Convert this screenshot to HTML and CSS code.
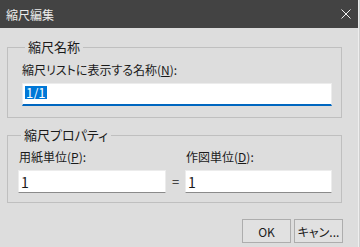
FILE: index.html
```html
<!DOCTYPE html>
<html lang="ja">
<head>
    <meta charset="UTF-8">
    <title>縮尺編集</title>
    <link rel="stylesheet" href="styles.css">
</head>
<body>
    <div class="window">
        <div class="titlebar">
            <span class="title">縮尺編集</span>
            <svg class="close" width="10" height="10" viewBox="0 0 10 10">
                <path d="M0.5 0.5 L9.5 9.5 M9.5 0.5 L0.5 9.5" stroke="#f2f2f2" stroke-width="1" fill="none"/>
            </svg>
        </div>

        <div class="content">
            <fieldset class="group group-name">
                <legend>縮尺名称</legend>
                <label class="field-label">縮尺リストに表示する名称(<u>N</u>):</label>
                <div class="textbox focused"><span class="selected">1/1</span></div>
            </fieldset>

            <fieldset class="group group-props">
                <legend>縮尺プロパティ</legend>
                <div class="unit-row">
                    <div class="unit">
                        <label class="field-label">用紙単位(<u>P</u>):</label>
                        <div class="textbox">1</div>
                    </div>
                    <span class="equals">=</span>
                    <div class="unit">
                        <label class="field-label">作図単位(<u>D</u>):</label>
                        <div class="textbox">1</div>
                    </div>
                </div>
            </fieldset>

            <div class="buttons">
                <button>OK</button>
                <button>キャン...</button>
            </div>
        </div>
    </div>
</body>
</html>
```

FILE: styles.css
```css
body {
    margin: 0;
    width: 360px;
    height: 247px;
    overflow: hidden;
    background: #cfcfcf;
    font-family: "Noto Sans CJK JP", "Noto Sans", sans-serif;
    font-feature-settings: "palt";
    font-size: 12px;
    color: #1a1a1a;
}
.window {
    width: 358px;
    height: 247px;
    background: #dddddd;
    border-right: 1px solid #efefef;
}
.titlebar {
    height: 28px;
    background: #434343;
    color: #ececec;
    display: flex;
    align-items: center;
    justify-content: space-between;
    padding: 0 8px 0 6px;
    font-size: 12px;
}
.close {
    display: block;
    margin-right: -1px;
}
.content {
    padding: 12px 0 0 7px;
}
.group {
    box-sizing: border-box;
    width: 335px;
    margin: 0;
    border: 1px solid #bfbfbf;
    padding: 0;
}
.group legend {
    margin-left: 3px;
    padding: 0 3px;
    font-size: 13px;
    line-height: 14px;
}
.group-name {
    padding: 9px 9px 11px 14px;
}
.group-props {
    margin-top: 10px;
    padding: 8px 9px 9px 10px;
}
.field-label {
    display: block;
    line-height: 14px;
    margin-bottom: 6px;
}
.group-props .field-label {
    margin-left: 1px;
}
.textbox {
    height: 23px;
    background: #ffffff;
    border: 1px solid #ececec;
    border-bottom-color: #8a8a8a;
    box-sizing: border-box;
    padding: 2px 2px;
    font-size: 14px;
    line-height: 18px;
}
.textbox.focused {
    border-bottom: 2px solid #0067c0;
    font-size: 13px;
    line-height: 13px;
    padding-top: 2px;
}
.selected {
    display: inline-block;
    background: #0078d7;
    color: #ffffff;
    padding: 0 1px;
    height: 13px;
}
.unit-row {
    display: flex;
    align-items: flex-end;
}
.unit {
    flex: 0 0 148px;
}
.unit:last-child {
    flex-basis: 147px;
}
.equals {
    width: 19px;
    text-align: center;
    line-height: 23px;
    font-size: 13px;
}
.buttons {
    display: flex;
    justify-content: flex-end;
    gap: 3px;
    padding-right: 15px;
    margin-top: 16px;
}
button {
    width: 49px;
    height: 24px;
    background: #e1e1e1;
    border: 1px solid #adadad;
    font-family: inherit;
    font-feature-settings: "palt";
    font-size: 12px;
    color: #1a1a1a;
    padding: 0;
}
```
